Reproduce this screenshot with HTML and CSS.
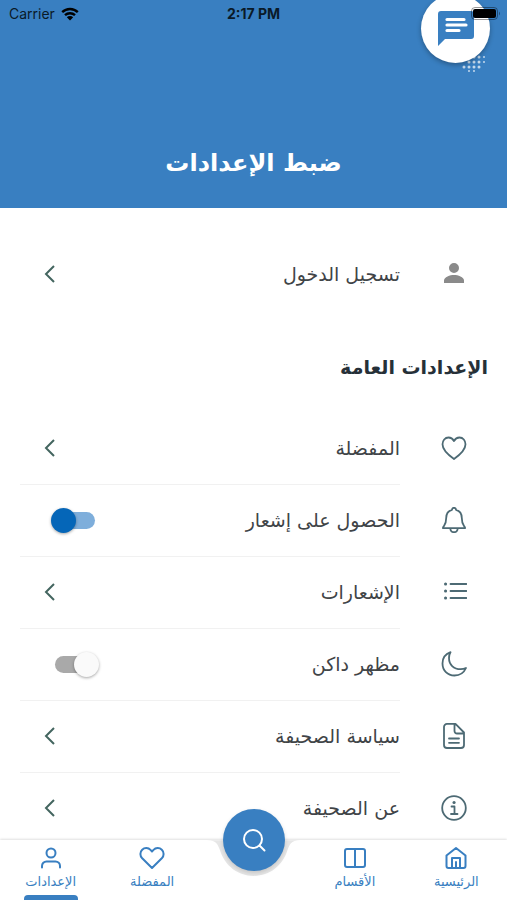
FILE: index.html
```html
<!DOCTYPE html>
<html lang="ar" dir="rtl">
<head>
<meta charset="utf-8">
<meta name="viewport" content="width=device-width, initial-scale=1">
<title>ضبط الإعدادات</title>
<link rel="stylesheet" href="styles.css">
</head>
<body>
<div class="app">
  <header class="header">
    <div class="status" dir="ltr">
      <span class="carrier">Carrier
        <svg class="wifi" viewBox="0 0 18 14" aria-hidden="true"><path d="M1.2 5.2a11.2 11.2 0 0 1 15.6 0M4 8.2a7.2 7.2 0 0 1 10 0" fill="none" stroke="currentColor" stroke-width="2.4"/><path d="M9 13.6l-3.2-3.3a4.6 4.6 0 0 1 6.4 0z" fill="currentColor"/></svg>
      </span>
      <time class="clock">2:17 PM</time>
      <span></span>
    </div>
    <svg class="dots" viewBox="0 0 24 20" aria-hidden="true"><g fill="none" stroke="#fff" stroke-width="3" stroke-linecap="round" stroke-dasharray="0 5"><path d="M12 3h8"/><path d="M7 3h3"/><path d="M7 8h11"/><path d="M2 13h16"/><path d="M7 17h6" stroke-width="2"/><path d="M22 3h1M22 8h1" stroke-width="2"/></g></svg>
    <button class="chat" type="button" aria-label="الرسائل">
      <svg viewBox="0 0 36 36" aria-hidden="true"><path d="M3 0h30a3 3 0 0 1 3 3v22a3 3 0 0 1-3 3H7l-7 7V3a3 3 0 0 1 3-3z" fill="#397fc1"/><path d="M9 8.500h17M9 14h19M9 19.500h12" stroke="#fff" stroke-width="3.200" stroke-linecap="round"/></svg>
    </button>
    <svg class="battery" viewBox="0 0 30 14" aria-hidden="true"><rect x=".5" y=".5" width="26" height="12" rx="3.500" fill="none" stroke="#000" stroke-opacity=".4"/><rect x="2" y="2" width="23" height="9" rx="2" fill="#000"/><path d="M28 4.500q2 2 0 4z" fill="#000" fill-opacity=".4"/></svg>
    <h1 class="title">ضبط الإعدادات</h1>
  </header>

  <main class="content">
    <a class="row login" href="#login">
      <span class="icon"><svg viewBox="0 0 24 24"><path fill="#8a8a8a" d="M12 2a5 5 0 1 1 0 10 5 5 0 0 1 0-10zM2 22v-2.500C2 16 8 14 12 14s10 2 10 5.500V22z"/></svg></span>
      <span class="body"><span class="label">تسجيل الدخول</span><svg class="chevron" viewBox="0 0 12 20"><path d="M10 2 2 10l8 8"/></svg></span>
    </a>
    <h2 class="section">الإعدادات العامة</h2>
    <ul class="list">
      <li><a class="row" href="#favorites">
        <span class="icon"><svg class="line" viewBox="0 0 26 26"><path d="M13 24C8 20.500 1.500 15.500 1.500 9.300 1.500 5.500 4 2.500 7.500 2.500c2.500 0 4.300 1.300 5.500 3.500 1.200-2.200 3-3.500 5.500-3.500 3.500 0 6 3 6 6.800C24.500 15.500 18 20.500 13 24z"/></svg></span>
        <span class="body"><span class="label">المفضلة</span><svg class="chevron" viewBox="0 0 12 20"><path d="M10 2 2 10l8 8"/></svg></span>
      </a></li>
      <li><div class="row">
        <span class="icon"><svg class="line" viewBox="0 0 26 26"><path d="M11 2.800a2 2 0 0 1 4 0c3.800 1 5.800 4 5.800 8.200 0 6 1.300 6.500 3.200 9.500v.7H2v-.7c1.900-3 3.200-3.500 3.200-9.500C5.200 6.800 7.200 3.800 11 2.800zM9.300 21.500c.2 2.300 1.700 3.700 3.700 3.700s3.500-1.400 3.700-3.700"/></svg></span>
        <span class="body"><label class="label" for="notify">الحصول على إشعار</label><input class="switch" id="notify" type="checkbox" checked></span>
      </div></li>
      <li><a class="row" href="#notifications">
        <span class="icon"><svg class="line" viewBox="0 0 26 26"><path d="M9.500 5h16M9.500 12h16M9.500 19h16"/><path stroke-width="3" d="M4.500 5h.1M4.500 12h.1M4.500 19h.1"/></svg></span>
        <span class="body"><span class="label">الإشعارات</span><svg class="chevron" viewBox="0 0 12 20"><path d="M10 2 2 10l8 8"/></svg></span>
      </a></li>
      <li><div class="row">
        <span class="icon"><svg class="line" viewBox="0 0 26 26"><path d="M9.500 1.200C4.500 3 1.500 7.500 1.500 12.500c0 7 5 12 12 12 5 0 9.500-3 11.500-7.500-1.500.7-3.500 1.200-5.300 1.200C12.500 18.200 8 13.500 8 7c0-2.200.5-4.200 1.500-5.800z"/></svg></span>
        <span class="body"><label class="label" for="dark">مظهر داكن</label><input class="switch" id="dark" type="checkbox"></span>
      </div></li>
      <li><a class="row" href="#policy">
        <span class="icon"><svg class="line" viewBox="0 0 26 26"><path d="M6 .9h8.500L23 9.500V22a3 3 0 0 1-3 3H6a3 3 0 0 1-3-3V4A3 3 0 0 1 6 .9zM13.500 1v7a2.500 2.500 0 0 0 2.500 2.500h7M8 15.500h10M8 19.800h10"/></svg></span>
        <span class="body"><span class="label">سياسة الصحيفة</span><svg class="chevron" viewBox="0 0 12 20"><path d="M10 2 2 10l8 8"/></svg></span>
      </a></li>
      <li><a class="row" href="#about">
        <span class="icon"><svg class="line" viewBox="0 0 26 26"><circle cx="13" cy="13" r="11.800"/><path d="M10.500 11.500h3V19M10 19h6.500"/><path stroke-width="3" d="M13 7.500h.1"/></svg></span>
        <span class="body"><span class="label">عن الصحيفة</span><svg class="chevron" viewBox="0 0 12 20"><path d="M10 2 2 10l8 8"/></svg></span>
      </a></li>
    </ul>
  </main>

  <nav class="nav">
    <a class="tab" href="#home"><svg viewBox="0 0 24 24"><path d="M2.500 9.500 12 2l9.500 7.500V20a2 2 0 0 1-2 2h-15a2 2 0 0 1-2-2zM8 22V12h8v10M12 16v6"/></svg><span>الرئيسية</span></a>
    <a class="tab" href="#sections"><svg viewBox="0 0 24 24"><path d="M4 3h16a2 2 0 0 1 2 2v14a2 2 0 0 1-2 2H4a2 2 0 0 1-2-2V5a2 2 0 0 1 2-2zM12 3v18"/></svg><span>الأقسام</span></a>
    <div class="middle">
      <svg class="notch" viewBox="0 0 102 44" aria-hidden="true"><path d="M0 0h4C14 0 15 5 17 10 22 26 35 36 51 36S80 26 85 10C87 5 88 0 98 0h4z" fill="#e6e6e6"/></svg>
      <button class="search" type="button" aria-label="بحث"><svg viewBox="0 0 24 24"><circle cx="11" cy="11" r="9"/><path d="m17.500 17.500 5 5"/></svg></button>
    </div>
    <a class="tab" href="#favorites"><svg class="wide" viewBox="0 0 26 24"><path d="M13 22 3.200 12.300C.8 9.800.8 6 3.200 3.700 5.600 1.400 9.300 1.600 11.500 3.900L13 5.500l1.500-1.600c2.200-2.300 5.900-2.500 8.300-.2 2.400 2.300 2.400 6.100 0 8.600z"/></svg><span>المفضلة</span></a>
    <a class="tab active" href="#settings" aria-current="page"><svg viewBox="0 0 24 24"><circle cx="12" cy="7" r="4.500"/><path d="M3 21.500V20a4.500 4.500 0 0 1 4.500-4.500h9A4.500 4.500 0 0 1 21 20v1.500"/></svg><span>الإعدادات</span></a>
  </nav>
</div>
</body>
</html>
```

FILE: styles.css
```css
* { box-sizing: border-box; }

body {
  margin: 0;
  background: #fff;
  color: #3f4447;
  font-family: "DejaVu Sans", sans-serif;
}

a { color: inherit; text-decoration: none; }
button { border: 0; padding: 0; cursor: pointer; }

.app {
  display: flex;
  flex-direction: column;
  height: 100vh;
  overflow: hidden;
}

.header {
  position: relative;
  flex: none;
  display: flex;
  flex-direction: column;
  height: 208px;
  background: #397fc1;
}

.status {
  display: grid;
  grid-template-columns: 1fr auto 1fr;
  padding: 4px 9px;
  color: #0a1a28;
  font: 14px/20px Inter, sans-serif;
}

.carrier { display: flex; align-items: center; gap: 6px; }
.wifi { width: 18px; height: 14px; color: #000; }
.clock { font-weight: 700; }

.chat {
  position: absolute;
  top: -6px;
  right: 17px;
  display: grid;
  place-items: center;
  width: 69px;
  height: 69px;
  border-radius: 50%;
  background: #fff;
  box-shadow: 0 2px 5px rgba(0, 0, 0, .3);
}
.chat svg { width: 36px; height: 36px; }

.battery { position: absolute; top: 7px; right: 6px; width: 30px; height: 14px; }
.dots { position: absolute; top: 54px; right: 21px; width: 24px; height: 20px; opacity: .7; }

.title {
  margin: auto 0 23px;
  color: #fff;
  font-size: 24px;
  line-height: 44px;
  text-align: center;
}

.content { flex: 1; min-height: 0; overflow: hidden; padding-top: 30px; }

.row { display: flex; height: 72px; padding-left: 20px; }

.icon { flex: none; display: grid; place-items: center; width: 107px; padding-bottom: 2px; }
.icon svg { width: 26px; height: 26px; }
.login .icon svg { width: 24px; height: 24px; }

.line {
  fill: none;
  stroke: #4d6a74;
  stroke-width: 1.800;
  stroke-linecap: round;
  stroke-linejoin: round;
}

.body {
  flex: 1;
  display: flex;
  align-items: center;
  justify-content: space-between;
  padding: 0 0 1px 24px;
}
.list .body { border-bottom: 1px solid #f1f1f1; }
.label { font-size: 19px; }

.chevron { width: 12px; height: 20px; fill: none; stroke: #43655f; stroke-width: 2; }

.section { margin: 29px 19px 18px; color: #263038; font-size: 19px; line-height: 56px; }
.list { margin: 0; padding: 0; list-style: none; }

.switch {
  appearance: none;
  display: flex;
  align-items: center;
  width: 40px;
  height: 17px;
  margin: 0 0 0 11px;
  border-radius: 9px;
  background: #a9a9a9;
}
.switch::before {
  content: "";
  flex: none;
  width: 25px;
  height: 25px;
  margin: 0 -4px;
  border-radius: 50%;
  background: #fafafa;
  box-shadow: 0 1px 3px rgba(0, 0, 0, .35);
}
.switch:checked { justify-content: flex-end; background: #7eaedb; }
.switch:checked::before { background: #0566b8; }

.nav {
  position: relative;
  flex: none;
  display: grid;
  grid-template-columns: repeat(5, 1fr);
  height: 60px;
  background: #fff;
  box-shadow: 0 -1px 2px rgba(0, 0, 0, .12);
  color: #397fc1;
}

.tab {
  position: relative;
  display: flex;
  flex-direction: column;
  align-items: center;
  padding-top: 6px;
  font-size: 13px;
  line-height: 24px;
}
.tab svg, .search svg {
  width: 24px;
  height: 24px;
  fill: none;
  stroke: currentColor;
  stroke-width: 2;
  stroke-linecap: round;
  stroke-linejoin: round;
}
.tab .wide { width: 26px; }
.active::after {
  content: "";
  position: absolute;
  bottom: 0;
  width: 54px;
  height: 5px;
  border-radius: 4px 4px 0 0;
  background: #397fc1;
}

.middle { position: relative; display: flex; justify-content: center; }
.notch { position: absolute; top: 0; left: 0; width: 100%; height: 44px; }
.search {
  position: absolute;
  top: -31px;
  display: grid;
  place-items: center;
  width: 62px;
  height: 62px;
  border-radius: 50%;
  background: #397fc1;
  color: #fff;
  box-shadow: 0 2px 4px rgba(0, 0, 0, .15);
}
```
